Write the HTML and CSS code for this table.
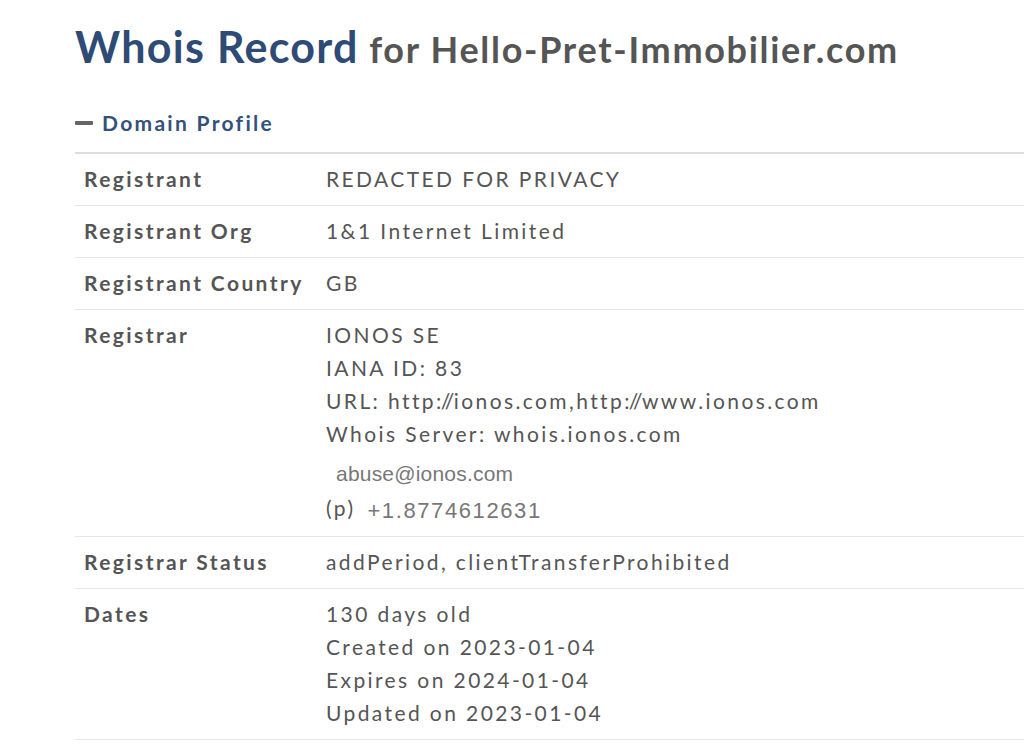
FILE: index.html
```html
<!DOCTYPE html>
<html>
<head>
<meta charset="utf-8">
<link rel="stylesheet" href="styles.css">
</head>
<body>
<div class="page">
  <h1 class="title"><span class="title-main">Whois Record</span> <span class="title-sub">for Hello-Pret-Immobilier.com</span></h1>
  <h2 class="section"><span class="minus"></span>Domain Profile</h2>
  <div class="table">
    <div class="row">
      <div class="label">Registrant</div>
      <div class="value">REDACTED FOR PRIVACY</div>
    </div>
    <div class="row">
      <div class="label">Registrant Org</div>
      <div class="value">1&amp;1 Internet Limited</div>
    </div>
    <div class="row">
      <div class="label">Registrant Country</div>
      <div class="value">GB</div>
    </div>
    <div class="row">
      <div class="label">Registrar</div>
      <div class="value">
        <div>IONOS SE</div>
        <div>IANA ID: 83</div>
        <div>URL: http<span class="tight">://</span>ionos.com,http<span class="tight">://</span>www.ionos.com</div>
        <div>Whois Server: whois.ionos.com</div>
        <div class="email"><span class="img-text">abuse@ionos.com</span></div>
        <div class="phone"><span class="p-label">(p)</span><span class="img-text phone-num">+1.8774612631</span></div>
      </div>
    </div>
    <div class="row">
      <div class="label">Registrar Status</div>
      <div class="value">addPeriod, clientTransferProhibited</div>
    </div>
    <div class="row">
      <div class="label">Dates</div>
      <div class="value">
        <div>130 days old</div>
        <div>Created on 2023-01-04</div>
        <div>Expires on 2024-01-04</div>
        <div>Updated on 2023-01-04</div>
      </div>
    </div>
  </div>
</div>
</body>
</html>
```

FILE: styles.css
```css
html, body {
  margin: 0;
  padding: 0;
  background: #fff;
  overflow: hidden;
}
body {
  font-family: Lato, "Noto Sans", sans-serif;
  color: #555;
}
.page {
  padding-left: 75px;
}
.title {
  margin: 21px 0 0;
  font-size: 43px;
  line-height: 1.2;
  font-weight: 700;
  white-space: nowrap;
}
.title-main {
  color: #2e4b76;
  letter-spacing: 1.3px;
}
.title-sub {
  color: #555;
  font-size: 36px;
  letter-spacing: 1.7px;
}
.section {
  margin: 35px 0 0;
  font-size: 21px;
  line-height: 30px;
  font-weight: 700;
  color: #34517c;
  display: flex;
  align-items: center;
  letter-spacing: 2.3px;
}
.minus {
  display: inline-block;
  width: 18px;
  height: 4px;
  background: #666;
  margin-right: 9px;
  border-radius: 1px;
}
.table {
  margin-top: 14px;
  border-top: 2px solid #ddd;
}
.row {
  display: flex;
  border-bottom: 1px solid #e6e6e6;
  padding: 8px 0 10px;
  font-size: 21px;
  line-height: 33px;
  letter-spacing: 2.4px;
}
.label {
  width: 242px;
  flex: none;
  padding-left: 9px;
  font-weight: 700;
  color: #555;
}
.value {
  flex: 1;
  color: #555;
}
.tight {
  letter-spacing: -0.6px;
}
.email {
  height: 38px;
  line-height: 45px;
}
.email .img-text {
  margin-left: 10px;
  letter-spacing: 0.2px;
}
.phone {
  height: 35px;
  padding-top: 3px;
  line-height: 38px;
  display: flex;
  align-items: baseline;
  gap: 12px;
}
.p-label {
  position: relative;
  top: -2px;
}
.img-text {
  font-family: "Liberation Sans", Arial, sans-serif;
  color: #777;
  font-size: 21px;
  letter-spacing: 0;
}
.phone-num {
  font-size: 22px;
  letter-spacing: 1.6px;
}
```
